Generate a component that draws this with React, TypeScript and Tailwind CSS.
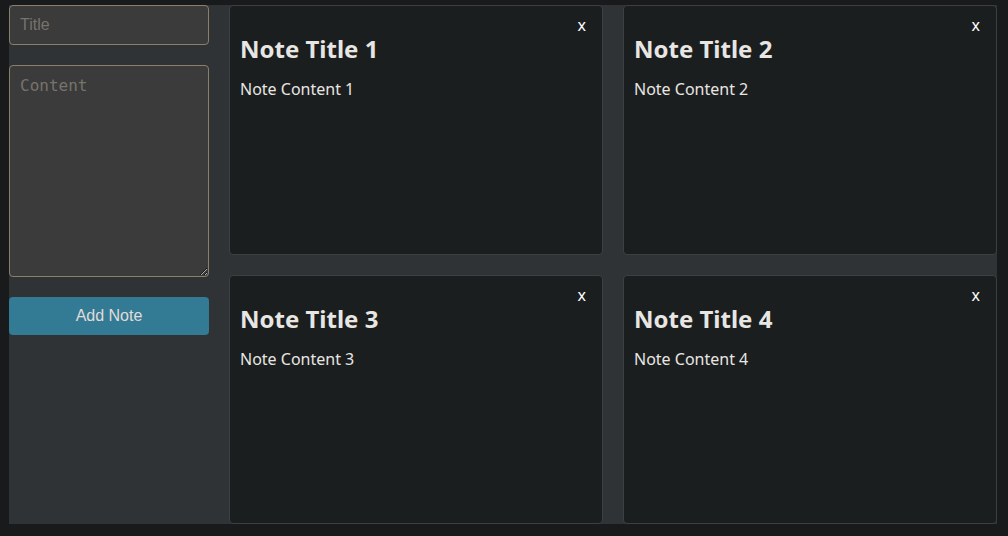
import React, { useState } from 'react';

interface Note {
  id: number;
  title: string;
  content: string;
}

const initialNotes: Note[] = [
  { id: 1, title: 'Note Title 1', content: 'Note Content 1' },
  { id: 2, title: 'Note Title 2', content: 'Note Content 2' },
  { id: 3, title: 'Note Title 3', content: 'Note Content 3' },
  { id: 4, title: 'Note Title 4', content: 'Note Content 4' },
];

export default function App() {
  const [notes, setNotes] = useState<Note[]>(initialNotes);
  const [title, setTitle] = useState('');
  const [content, setContent] = useState('');

  const addNote = () => {
    if (!title && !content) return;
    setNotes([...notes, { id: Date.now(), title, content }]);
    setTitle('');
    setContent('');
  };

  return (
    <div className="min-h-[536px] bg-[#181a1b] pt-[5px] pl-[9px]">
      <div className="flex w-[988px] h-[519px] gap-[20px] bg-[#303336]">
        {/* Sidebar form */}
        <div className="flex w-[200px] shrink-0 flex-col">
          <input
            value={title}
            onChange={e => setTitle(e.target.value)}
            placeholder="Title"
            className="h-[40px] w-full rounded-[4px] border border-[#8b7f6c] bg-[#3b3b3b] px-[10px] text-[16px] text-[#e8e6e3] placeholder-[#77736d] outline-none font-['Liberation_Sans',sans-serif]"
          />
          <textarea
            value={content}
            onChange={e => setContent(e.target.value)}
            placeholder="Content"
            className="mt-[20px] h-[212px] w-full rounded-[4px] border border-[#8b7f6c] bg-[#3b3b3b] px-[10px] py-[8px] text-[16px] text-[#e8e6e3] placeholder-[#77736d] outline-none font-['DejaVu_Sans_Mono',monospace]"
          />
          <button
            onClick={addNote}
            className="mt-[20px] h-[38px] w-full rounded-[4px] bg-[#337a94] text-[16px] text-[#e0ddd8] font-['Liberation_Sans',sans-serif]"
          >
            Add Note
          </button>
        </div>

        {/* Notes grid */}
        <div className="grid flex-1 grid-cols-2 grid-rows-2 gap-[20px] font-['Noto_Sans',sans-serif]">
          {notes.slice(0, 4).map(n => (
            <div
              key={n.id}
              className="relative rounded-[4px] border border-[#3c4043] bg-[#1b1e1f] px-[10px] text-[#e8e6e3]"
            >
              <button
                onClick={() => setNotes(notes.filter(x => x.id !== n.id))}
                className="absolute right-[16px] top-[7px] text-[16px] text-white"
              >
                x
              </button>
              <h2 className="mt-[27px] text-[24px] font-bold leading-[32px]">{n.title}</h2>
              <p className="mt-[12px] text-[16px] leading-[24px]">{n.content}</p>
            </div>
          ))}
        </div>
      </div>
    </div>
  );
}
